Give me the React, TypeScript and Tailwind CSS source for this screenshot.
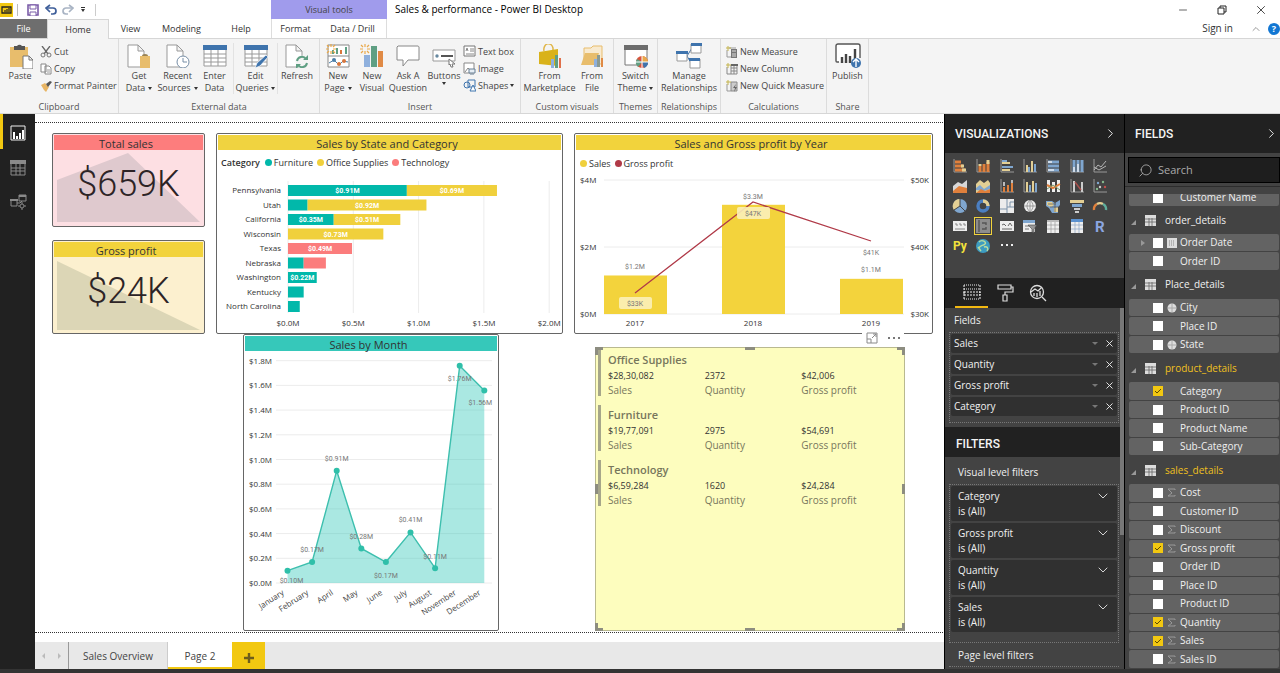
import { useState, type ReactNode } from "react";
import { ChevronDown, ChevronRight, ChevronUp, Minus, Search, X } from "lucide-react";

const YELLOW = "#f2c811";
const TEAL = "#01b8aa";
const GOLD = "#f0d03c";
const CORAL = "#fb7c7c";

type SvgProps = { children: ReactNode; size?: number };

function Svg({ children, size = 24 }: SvgProps) {
  return (
    <svg width={size} height={size} viewBox={`0 0 ${size} ${size}`} fill="none" className="shrink-0" aria-hidden="true">
      {children}
    </svg>
  );
}

/* ---------- Ribbon icons ---------- */

const page = "M4 1h10l6 6v16H4z M14 1v6h6";

function TableArt({ pencil }: { pencil?: boolean }) {
  return (
    <Svg>
      <path d="M1 2h22v20H1z" fill="#fff" stroke="#999" />
      <path d="M0 1h24v5H0z" fill="#3f74ad" />
      <path d="M1 10h22M1 14h22M1 18h22M8 6v16M15 6v16" stroke="#999" />
      {pencil && <path d="M11 24l2-5L22 11l2 2-8 9z" fill="#3f74ad" stroke="#fff" strokeWidth=".7" />}
    </Svg>
  );
}

function Spark() {
  return (
    <path d="M5 0v3M5 7v3M0 5h3M7 5h3M1 1l2 2M7 7l2 2M9 1L7 3M3 7L1 9" stroke="#e9a94b" strokeWidth="1.2" />
  );
}

const ribbonArt: Record<string, ReactNode> = {
  paste: (
    <Svg size={26}>
      <path d="M3 4h18v20H3z" fill="#e8bd6c" />
      <path d="M7 3h3a3 3 0 0 1 5 0h3v4H7z" fill="#555" />
      <path d="M16 13h6l4 4v9H16z M22 13v4h4" fill="#fff" stroke="#777" />
    </Svg>
  ),
  getData: (
    <Svg>
      <path d={page} transform="translate(-3)" fill="#fff" stroke="#999" />
      <path d="M13 12h10v12H13z" fill="#e8bd6c" />
      <path d="M15 12a3 2 0 0 1 6 0z" fill="#9a8354" />
    </Svg>
  ),
  recent: (
    <Svg>
      <path d={page} transform="translate(-3)" fill="#fff" stroke="#999" />
      <circle cx="17" cy="18" r="6" fill="#fff" stroke="#778ea6" />
      <path d="M17 14v4h4" stroke="#778ea6" />
    </Svg>
  ),
  enter: <TableArt />,
  edit: <TableArt pencil />,
  refresh: (
    <Svg>
      <path d={page} transform="translate(-3)" fill="#fff" stroke="#999" />
      <circle cx="17" cy="18" r="6.5" fill="#f4f4f4" />
      <path d="M12 17a5 5 0 0 1 9-2M22 19a5 5 0 0 1-9 2" stroke="#5f9f83" strokeWidth="2" />
      <path d="M23 11v5h-5z M11 25v-5h5z" fill="#5f9f83" />
    </Svg>
  ),
  newPage: (
    <Svg>
      <path d="M2 1h21v22H2z M2 12h21" fill="#fff" stroke="#888" />
      <path d="M7 6v4M11 4v6" stroke="#5f9f83" strokeWidth="2" />
      <path d="M15 6v4" stroke="#d9763c" strokeWidth="2" />
      <path d="M20 3v7" stroke="#5f9f83" strokeWidth="2" />
      <path d="M3 19l5-3 5 5 4-4 5 1" stroke="#4c7fa8" />
      <circle cx="8" cy="16" r="2" fill="#4c7fa8" />
      <circle cx="13" cy="20" r="2" fill="#d9763c" />
      <circle cx="18" cy="17" r="2" fill="#d9763c" />
      <Spark />
    </Svg>
  ),
  newVisual: (
    <Svg>
      <path d="M4 11h6v12H4z" fill="#8fb0dd" />
      <path d="M11 2h6v21h-6z" fill="#5f9f83" />
      <path d="M18 7h5v16h-5z" fill="#e08a45" />
      <Spark />
    </Svg>
  ),
  ask: (
    <Svg>
      <path d="M2 2h20a2 2 0 0 1 1 1v13H12l-5 6v-6H1V3z" fill="#fff" stroke="#888" />
    </Svg>
  ),
  buttons: (
    <Svg>
      <path d="M1 6h22v11H1z" fill="#fff" stroke="#999" />
      <circle cx="5" cy="12" r="1.7" fill="#6688a0" />
      <path d="M9 12h12" stroke="#555" strokeWidth="2" />
      <path d="M17 15l6 5-3 0 1 3-2 0-1-3-1 1z" fill="#fff" stroke="#777" />
    </Svg>
  ),
  market: (
    <Svg>
      <path d="M6 7a4 5 0 0 1 9-3v4" stroke="#e0b64a" strokeWidth="1.5" />
      <path d="M1 8l19-3v17L1 20z" fill="#d9b21a" />
      <path d="M13 15h3v9h-3z" fill="#8fb0dd" />
      <path d="M17 11h3v13h-3z" fill="#5f9f83" />
      <path d="M21 14h2v10h-2z" fill="#e0704a" />
    </Svg>
  ),
  file: (
    <Svg>
      <path d="M4 4h7l2-2h9v18H4z" fill="#f8ead0" stroke="#e8bd6c" />
      <path d="M1 21l4-12h14l-4 12z" fill="#e8bd6c" />
      <path d="M14 15h3v8h-3z" fill="#8fb0dd" />
      <path d="M17 11h3v12h-3z" fill="#8a9a93" />
      <path d="M21 14h2v9h-2z" fill="#e08a45" />
    </Svg>
  ),
  theme: (
    <Svg>
      <path d="M1 2h22v19H1z" fill="#fff" stroke="#777" />
      <path d="M0 1h24v5H0z" fill="#6d6d6d" />
      <circle cx="18" cy="18" r="6" fill="#d9543c" />
      <path d="M18 18V12a6 6 0 0 1 6 6z" fill="#e9a94b" />
      <path d="M18 18h6a6 6 0 0 1-4 6z" fill="#3f74ad" />
      <path d="M18 18l-5-3a6 6 0 0 0 1 8z" fill="#5f9f83" />
      <path d="M18 12v12M12 18h12" stroke="#fff" />
    </Svg>
  ),
  manage: (
    <Svg size={26}>
      <path d="M11 13l5-8M11 13l4 7" stroke="#3f74ad" />
      <path d="M1 9h10v9H1zM15 1h10v9H15zM14 16h10v9H14z" fill="#fff" stroke="#999" />
      <path d="M0 8h12v3H0zM15 0h11v3H15zM13 15h11v3H13z" fill="#3f74ad" />
    </Svg>
  ),
  publish: (
    <Svg size={26}>
      <path d="M4 19H2a1 1 0 0 1-1-1V3a2 2 0 0 1 2-2h20a2 2 0 0 1 2 2v12" fill="#fff" stroke="#555" strokeWidth="1.4" />
      <path d="M7 14v6M11 11v9M15 13v7M20 6v13" stroke="#444" strokeWidth="2.4" />
      <circle cx="21" cy="20" r="5" fill="#3f74ad" />
      <path d="M21 24v-7M18 19l3-3 3 3" stroke="#fff" strokeWidth="1.4" />
    </Svg>
  ),
};

const smallArt: Record<string, ReactNode> = {
  cut: (
    <Svg size={12}>
      <path d="M2 0l6 8M10 0L4 8" stroke="#666" strokeWidth="1.3" />
      <circle cx="3" cy="9" r="2" stroke="#777" />
      <circle cx="9" cy="9" r="2" stroke="#777" />
    </Svg>
  ),
  copy: (
    <Svg size={12}>
      <path d="M1 1h5v8H1zM5 3h4l2 2v6H5z" fill="#fff" stroke="#888" />
      <path d="M7 7h3M7 9h3" stroke="#999" />
    </Svg>
  ),
  painter: (
    <Svg size={12}>
      <path d="M1 5l4-2 4 4-3 5-2-2z" fill="#e8b564" />
      <path d="M6 4l4-3 2 1-4 5z" fill="#555" />
    </Svg>
  ),
  textBox: (
    <Svg size={13}>
      <path d="M1 1h11v10H1z" fill="#fff" stroke="#777" />
      <path d="M3 6l1-3 1 3M7 4h4M7 6h4M3 9h8" stroke="#888" />
    </Svg>
  ),
  image: (
    <Svg size={13}>
      <path d="M1 1h10v10H1z" fill="#fff" stroke="#888" />
      <path d="M2 10l3-4 3 3" stroke="#888" />
      <path d="M6 7h6v4H6zM7 13h4" fill="#e6eef5" stroke="#667f94" />
    </Svg>
  ),
  shapes: (
    <Svg size={13}>
      <circle cx="4" cy="6" r="3" stroke="#3f74ad" />
      <path d="M5 1h7v7H5z" stroke="#3f74ad" />
      <path d="M7 12l3-6 3 6z" fill="#fff" stroke="#3f74ad" />
    </Svg>
  ),
  measure: (
    <Svg size={12}>
      <path d="M1 4v7h4M3 2h7" stroke="#999" />
      <path d="M5 3h6v9H5z" fill="#777" />
      <path d="M6 5h4M6 8h4M6 10h4" stroke="#ddd" />
      <path d="M2 0v5M0 2h5" stroke="#c4b44f" />
    </Svg>
  ),
  column: (
    <Svg size={12}>
      <path d="M1 4v7h10V2H5" stroke="#888" />
      <path d="M5 2v9M8 2v9M5 5h6M5 8h6" stroke="#888" />
      <path d="M5 1h7v2H5z" fill="#666" />
      <path d="M2 0v5M0 2h5" stroke="#c4b44f" />
    </Svg>
  ),
  quick: (
    <Svg size={12}>
      <path d="M1 4v7h4" stroke="#999" />
      <path d="M5 2h6v9H5z" fill="#ccc" stroke="#888" />
      <path d="M10 4l-3 4h2l-1 4 3-5H9z" fill="#666" />
      <path d="M2 0v5M0 2h5" stroke="#c4b44f" />
    </Svg>
  ),
};

/* ---------- Ribbon ---------- */

type BigProps = { icon: string; top: string; bottom?: string; caret?: boolean; width: string };

function BigButton({ icon, top, bottom, caret, width }: BigProps) {
  return (
    <button type="button" className={`flex flex-col items-center leading-[12px] ${width}`}>
      <span className="mb-px flex h-[26px] items-center">{ribbonArt[icon]}</span>
      <span className="whitespace-nowrap">{top}</span>
      <span className="flex items-center gap-[3px] whitespace-nowrap">
        {bottom}
        {caret && <Caret />}
      </span>
    </button>
  );
}

function Caret() {
  return <span className="border-x-2 border-t-[3px] border-x-transparent border-t-[#333]" />;
}

function SmallButton({ icon, label, caret }: { icon: string; label: string; caret?: boolean }) {
  return (
    <button type="button" className="flex h-[17px] items-center gap-0.5 whitespace-nowrap">
      {smallArt[icon]}
      {label}
      {caret && <Caret />}
    </button>
  );
}

function Group({ label, width, children }: { label: string; width: string; children: ReactNode }) {
  return (
    <section className={`flex shrink-0 flex-col justify-between border-r border-[#dcdcdc] ${width}`}>
      <div className="flex pt-1">{children}</div>
      <div className="text-center leading-3 text-[#555]">{label}</div>
    </section>
  );
}

function Ribbon() {
  return (
    <div className="flex h-[76px] shrink-0 border-y border-[#d6d6d6] bg-[#f4f4f4] text-[9px] text-[#444]">
      <Group label="Clipboard" width="w-[119px]">
        <BigButton icon="paste" top="Paste" width="w-10" />
        <div className="flex flex-col">
          <SmallButton icon="cut" label="Cut" />
          <SmallButton icon="copy" label="Copy" />
          <SmallButton icon="painter" label="Format Painter" />
        </div>
      </Group>
      <Group label="External data" width="w-[201px]">
        <BigButton icon="getData" top="Get" bottom="Data" caret width="w-10" />
        <BigButton icon="recent" top="Recent" bottom="Sources" caret width="w-[37px]" />
        <BigButton icon="enter" top="Enter" bottom="Data" width="w-[37px]" />
        <BigButton icon="edit" top="Edit" bottom="Queries" caret width="w-[45px] border-x border-[#e2e2e2]" />
        <BigButton icon="refresh" top="Refresh" width="w-[38px]" />
      </Group>
      <Group label="Insert" width="w-[201px]">
        <BigButton icon="newPage" top="New" bottom="Page" caret width="w-[36px]" />
        <BigButton icon="newVisual" top="New" bottom="Visual" width="w-8" />
        <BigButton icon="ask" top="Ask A" bottom="Question" width="w-10" />
        <BigButton icon="buttons" top="Buttons" caret width="w-8" />
        <div className="ml-[3px] flex flex-col">
          <SmallButton icon="textBox" label="Text box" />
          <SmallButton icon="image" label="Image" />
          <SmallButton icon="shapes" label="Shapes" caret />
        </div>
      </Group>
      <Group label="Custom visuals" width="w-[93px]">
        <BigButton icon="market" top="From" bottom="Marketplace" width="w-[57px]" />
        <BigButton icon="file" top="From" bottom="File" width="w-7" />
      </Group>
      <Group label="Themes" width="w-11">
        <BigButton icon="theme" top="Switch" bottom="Theme" caret width="w-[43px]" />
      </Group>
      <Group label="Relationships" width="w-[63px]">
        <BigButton icon="manage" top="Manage" bottom="Relationships" width="w-[62px]" />
      </Group>
      <Group label="Calculations" width="w-[106px]">
        <div className="ml-[5px] flex flex-col">
          <SmallButton icon="measure" label="New Measure" />
          <SmallButton icon="column" label="New Column" />
          <SmallButton icon="quick" label="New Quick Measure" />
        </div>
      </Group>
      <Group label="Share" width="w-[42px]">
        <BigButton icon="publish" top="Publish" width="w-[41px]" />
      </Group>
    </div>
  );
}

/* ---------- Title bar and menu tabs ---------- */

function TitleBar() {
  return (
    <header className="flex h-[19px] shrink-0 items-stretch text-[#333]">
      <div className="flex w-[271px] items-center">
        <svg width="13" height="14" viewBox="0 0 13 14" aria-hidden="true">
          <path d="M0 0h13v14H0z" fill={YELLOW} />
          <path d="M2 10V4h9v6z" fill="none" stroke="#222" strokeWidth="1.3" />
          <path d="M5 9V7M7 9V6M9 9V5" stroke="#222" strokeWidth="1.2" />
        </svg>
        <span className="ml-1 h-3 border-l border-[#bbb]" />
        <button type="button" aria-label="Save" className="ml-[9px]">
          <Svg size={12}>
            <path d="M1 1h10v10H1z" stroke="#7b5ca8" strokeWidth="1.6" />
            <path d="M3 1h6v4H3zM3 8h6v4H3z" fill="#fff" stroke="#7b5ca8" />
          </Svg>
        </button>
        <button type="button" aria-label="Undo" className="ml-[6px]">
          <Svg size={12}>
            <path d="M2 4h6a3 3 0 0 1 0 6H6" stroke="#3f5f9a" strokeWidth="1.7" />
            <path d="M5 1L1 4l4 4" stroke="#3f5f9a" strokeWidth="1.7" />
          </Svg>
        </button>
        <button type="button" aria-label="Redo" className="ml-[5px]">
          <Svg size={12}>
            <path d="M10 4H4a3 3 0 0 0 0 6h2" stroke="#a9b4c4" strokeWidth="1.7" />
            <path d="M7 1l4 3-4 4" stroke="#a9b4c4" strokeWidth="1.7" />
          </Svg>
        </button>
        <button type="button" aria-label="Customize toolbar" className="ml-[7px] flex flex-col items-center gap-px">
          <span className="h-px w-1 bg-[#333]" />
          <Caret />
        </button>
        <span className="ml-[10px] h-3 border-l border-[#ccc]" />
      </div>
      <div className="flex w-[116px] items-center justify-center bg-[#a09bec] text-[9px] text-[#444]">Visual tools</div>
      <h1 className="flex flex-1 items-center pl-2 text-[10px] text-black">Sales &amp; performance - Power BI Desktop</h1>
      <div className="flex w-[117px] items-center justify-between pr-3">
        <button type="button" aria-label="Minimize" className="ml-[14px]">
          <Minus size={12} strokeWidth={1.5} />
        </button>
        <button type="button" aria-label="Restore">
          <Svg size={10}>
            <path d="M1 3h6v6H1zM3 3V1h6v6H7" stroke="#222" />
          </Svg>
        </button>
        <button type="button" aria-label="Close">
          <X size={14} strokeWidth={1.5} />
        </button>
      </div>
    </header>
  );
}

function MenuTabs() {
  return (
    <nav className="flex h-[19px] shrink-0 items-stretch text-[9px] text-[#333]">
      <button type="button" className="w-[47px] bg-[#6e6e6e] text-white">File</button>
      <button type="button" className="relative z-10 -mb-px w-[62px] border-x border-t border-[#d6d6d6] bg-[#f4f4f4]">Home</button>
      <button type="button" className="w-[43px]">View</button>
      <button type="button" className="w-[59px]">Modeling</button>
      <button type="button" className="w-[60px]">Help</button>
      <button type="button" className="w-[48px] border-l border-[#ddd]">Format</button>
      <button type="button" className="w-[68px] border-r border-[#ddd]">Data / Drill</button>
      <div className="ml-auto flex items-center">
        <button type="button" className="text-[10px]">Sign in</button>
        <button type="button" aria-label="Collapse ribbon" className="ml-[17px] text-[#999]">
          <ChevronUp size={12} />
        </button>
        <button type="button" aria-label="Help center" className="ml-[6px] size-3 rounded-full bg-[#1277d3] text-[9px] leading-3 font-bold text-white">
          ?
        </button>
      </div>
    </nav>
  );
}

/* ---------- Left view switcher ---------- */

function ViewRail() {
  return (
    <nav className="flex w-[35px] shrink-0 flex-col bg-[#212121]">
      <button type="button" aria-label="Report" className="flex h-[35px] items-center border-l-[3px] border-[#f2c811] pt-0.5 pl-[7px]">
        <Svg size={16}>
          <path d="M1 1h14v14H1z" stroke="#eee" />
          <path d="M4 14V7M7 14v-3M10 14V8M13 14V5" stroke="#fff" strokeWidth="2" />
        </Svg>
      </button>
      <button type="button" aria-label="Data" className="flex h-[35px] items-center pt-0.5 pl-[10px]">
        <Svg size={16}>
          <path d="M1 2h14v13H1z" stroke="#8a8a8a" />
          <path d="M0 0h16v4H0z" fill="#8a8a8a" />
          <path d="M1 8h14M1 11h14M6 4v11M10 4v11" stroke="#8a8a8a" />
        </Svg>
      </button>
      <button type="button" aria-label="Model" className="flex h-[35px] items-center pt-0.5 pl-[10px]">
        <Svg size={17}>
          <path d="M1 6h6v6H1zM9 1h7v6H9zM7 9h3l2-2" stroke="#8a8a8a" />
          <path d="M0 5h8v2H0zM9 1h7v2H9z" fill="#8a8a8a" />
          <circle cx="12" cy="12" r="2" stroke="#8a8a8a" />
          <path d="M12 8v2M12 14v2M8 12h2M14 12h2" stroke="#8a8a8a" />
        </Svg>
      </button>
    </nav>
  );
}

/* ---------- Report visuals ---------- */

function Tile({ title, bar, body = "bg-white", children }: { title: string; bar: string; body?: string; children: ReactNode }) {
  return (
    <article className={`flex min-w-0 flex-col overflow-hidden rounded-[2px] border border-[#666] ${body}`}>
      <h2 className={`mx-px mt-px h-[15px] shrink-0 pr-[5px] text-center text-[11px] leading-[17px] whitespace-nowrap text-[#333] ${bar}`}>{title}</h2>
      {children}
    </article>
  );
}

function Kpi({ value, points, fill }: { value: string; points: string; fill: string }) {
  return (
    <div className="relative flex flex-1 items-center justify-center font-['Roboto','Liberation_Sans',sans-serif] text-[36px] font-light leading-[38px] text-[#2d2426]">
      <svg className="absolute inset-0 size-full" viewBox="0 0 151 76" preserveAspectRatio="none" aria-hidden="true">
        <polygon points={points} fill={fill} />
      </svg>
      <span className="relative pb-2">{value}</span>
    </div>
  );
}

function Legend({ color, label }: { color: string; label: string }) {
  return (
    <span className="flex items-center gap-0.5">
      <span className={`size-[7px] rounded-full ${color}`} />
      {label}
    </span>
  );
}

type Part = { value: number; color: string; label?: string };

const states: { name: string; parts: Part[] }[] = [
  { name: "Pennsylvania", parts: [{ value: 0.91, color: TEAL, label: "$0.91M" }, { value: 0.69, color: GOLD, label: "$0.69M" }] },
  { name: "Utah", parts: [{ value: 0.15, color: TEAL }, { value: 0.91, color: GOLD, label: "$0.92M" }] },
  { name: "California", parts: [{ value: 0.35, color: TEAL, label: "$0.35M" }, { value: 0.51, color: GOLD, label: "$0.51M" }] },
  { name: "Wisconsin", parts: [{ value: 0.73, color: GOLD, label: "$0.73M" }] },
  { name: "Texas", parts: [{ value: 0.49, color: CORAL, label: "$0.49M" }] },
  { name: "Nebraska", parts: [{ value: 0.12, color: TEAL }, { value: 0.17, color: CORAL }] },
  { name: "Washington", parts: [{ value: 0.22, color: TEAL, label: "$0.22M" }] },
  { name: "Kentucky", parts: [{ value: 0.12, color: TEAL }] },
  { name: "North Carolina", parts: [{ value: 0.09, color: TEAL }] },
];

const axisText = "font-['Open_Sans','Noto_Sans',sans-serif] text-[8px]";
const dataText = "font-['Roboto','Liberation_Sans',sans-serif] text-[7px]";

function StateChart() {
  const x0 = 71;
  const perM = 130.6;
  return (
    <svg viewBox="0 0 345 157" className="w-full" role="img" aria-label="Sales by State and Category">
      {[0, 0.5, 1, 1.5, 2].map((t) => (
        <g key={t}>
          <path d={`M${x0 + t * perM} 6v132`} stroke="#ececec" />
          <text x={x0 + t * perM} y={151} textAnchor="middle" fill="#333" className={axisText}>{`$${t.toFixed(1)}M`}</text>
        </g>
      ))}
      {states.map((state, i) => {
        const y = 10 + i * 14.5;
        let x = x0;
        return (
          <g key={state.name}>
            <text x={64} y={y + 8} textAnchor="end" fill="#333" className={axisText}>{state.name}</text>
            {state.parts.map((part) => {
              const left = x;
              const width = part.value * perM;
              x += width;
              return (
                <g key={part.color}>
                  <rect x={left} y={y} width={width} height={11} fill={part.color} />
                  {part.label && (
                    <text x={left + width / 2} y={y + 8} textAnchor="middle" fill="#fff" className={`font-bold ${dataText}`}>
                      {part.label}
                    </text>
                  )}
                </g>
              );
            })}
          </g>
        );
      })}
    </svg>
  );
}

const years = [
  { year: "2017", x: 60, bar: 1.15, label: "$1.2M", labelY: 97, line: 121, profit: "$33K", profitY: 131, pill: true },
  { year: "2018", x: 178, bar: 3.26, label: "$3.3M", labelY: 27, line: 30, profit: "$47K", profitY: 41, pill: true },
  { year: "2019", x: 296, bar: 1.05, label: "$1.1M", labelY: 100, line: 69, profit: "$41K", profitY: 80, pill: false },
];

function YearChart() {
  return (
    <svg viewBox="0 0 357 161" className="w-full" role="img" aria-label="Sales and Gross profit by Year">
      {[8, 75, 142].map((y, i) => (
        <g key={y}>
          <path d={`M29 ${y}h300`} stroke="#ececec" />
          <text x={5} y={y + 3} fill="#333" className={axisText}>{["$4M", "$2M", "$0M"][i]}</text>
          <text x={354} y={y + 3} textAnchor="end" fill="#333" className={axisText}>{["$50K", "$40K", "$30K"][i]}</text>
        </g>
      ))}
      {years.map((d) => (
        <g key={d.year}>
          <rect x={d.x - 31} y={142 - d.bar * 33.5} width={63} height={d.bar * 33.5} fill="#f3d33c" />
          <text x={d.x} y={154} textAnchor="middle" fill="#333" className={axisText}>{d.year}</text>
          <text x={d.x} y={d.labelY} textAnchor="middle" fill="#777" className={dataText}>{d.label}</text>
        </g>
      ))}
      <polyline points={years.map((d) => `${d.x},${d.line}`).join(" ")} fill="none" stroke="#b03a48" strokeWidth="1.3" />
      {years.map((d) => (
        <g key={d.profit}>
          {d.pill && <rect x={d.x - 16} y={d.profitY - 6} width={33} height={12} rx={2} fill="#fbefb9" fillOpacity=".9" />}
          <text x={d.x} y={d.profitY + 3} textAnchor="middle" fill="#777" className={dataText}>{d.profit}</text>
        </g>
      ))}
    </svg>
  );
}

const months = [
  { name: "January", value: 0.1, label: "$0.10M", dx: 4, dy: 12 },
  { name: "February", value: 0.17, label: "$0.17M", dx: 0, dy: -10 },
  { name: "April", value: 0.91, label: "$0.91M", dx: 0, dy: -10 },
  { name: "May", value: 0.28, label: "$0.28M", dx: 0, dy: -9 },
  { name: "June", value: 0.17, label: "$0.17M", dx: 0, dy: 16 },
  { name: "July", value: 0.41, label: "$0.41M", dx: 0, dy: -10 },
  { name: "August", value: 0.12, label: "$0.11M", dx: 0, dy: -9 },
  { name: "November", value: 1.76, label: "$1.76M", dx: 0, dy: 15 },
  { name: "December", value: 1.56, label: "$1.56M", dx: -4, dy: 15 },
];

function MonthChart() {
  const base = 232;
  const pts = months.map((m, i) => ({ ...m, x: 43.5 + i * 24.6, y: base - m.value * 123.4 }));
  const line = pts.map((p) => `${p.x},${p.y}`).join(" ");
  return (
    <svg viewBox="0 0 254 279" className="w-full" role="img" aria-label="Sales by Month">
      {Array.from({ length: 10 }, (_, i) => (
        <g key={i}>
          <path d={`M32 ${base - i * 24.7}h216`} stroke="#ececec" />
          <text x={5} y={base + 3 - i * 24.7} fill="#333" className={axisText}>{`$${(i * 0.2).toFixed(1)}M`}</text>
        </g>
      ))}
      <polygon points={`43.5,${base} ${line} 240.3,${base}`} fill="#35c9bb" fillOpacity=".42" />
      <polyline points={line} fill="none" stroke="#3dbfae" strokeWidth="1.4" />
      {pts.map((p) => (
        <g key={p.name}>
          <circle cx={p.x} cy={p.y} r={3} fill="#2fbfa9" />
          <text x={p.x + p.dx} y={p.y + p.dy} textAnchor="middle" fill="#777" className={dataText}>{p.label}</text>
          <text transform={`translate(${p.x - 3} 243) rotate(-33)`} textAnchor="end" fill="#444" className={axisText}>{p.name}</text>
        </g>
      ))}
    </svg>
  );
}

const cards = [
  { category: "Office Supplies", sales: "$28,30,082", quantity: "2372", profit: "$42,006" },
  { category: "Furniture", sales: "$19,77,091", quantity: "2975", profit: "$54,691" },
  { category: "Technology", sales: "$6,59,284", quantity: "1620", profit: "$24,284" },
];

const handles = [
  "-top-px -left-px h-2 w-2 border-t-[3px] border-l-[3px]",
  "-top-px left-1/2 h-[3px] w-[10px] -translate-x-1/2 border-t-[3px]",
  "-top-px -right-px h-2 w-2 border-t-[3px] border-r-[3px]",
  "top-1/2 -left-px h-[10px] w-[3px] -translate-y-1/2 border-l-[3px]",
  "top-1/2 -right-px h-[10px] w-[3px] -translate-y-1/2 border-r-[3px]",
  "-bottom-px -left-px h-2 w-2 border-b-[3px] border-l-[3px]",
  "-bottom-px left-1/2 h-[3px] w-[10px] -translate-x-1/2 border-b-[3px]",
  "-right-px -bottom-px h-2 w-2 border-r-[3px] border-b-[3px]",
];

function MultiRowCard() {
  return (
    <article className="relative mt-[13px] flex min-w-0 flex-col gap-[9px] border border-[#b9b98f] bg-[#fdfdbe] pt-[2px] pl-[2px]">
      <div className="absolute -top-4 right-0 flex h-3 items-center gap-[10px] bg-white px-1">
        <button type="button" aria-label="Focus mode">
          <Svg size={12}>
            <path d="M1 1h10v10H1zM1 7h4v4M6 6l4-4M7 2h3v3" stroke="#8a8a8a" />
          </Svg>
        </button>
        <button type="button" aria-label="More options">
          <Svg size={12}>
            <path d="M0 6h2M5 6h2M10 6h2" stroke="#777" strokeWidth="2" />
          </Svg>
        </button>
      </div>
      {cards.map((c) => (
        <section key={c.category} className="h-[46px] border-l-[3px] border-[#a6a68a] pr-[6px] pl-[7px]">
          <h3 className="text-[11px] leading-[19px] font-semibold text-[#77765c]">{c.category}</h3>
          <dl className="grid grid-cols-3 text-[10px] leading-[14px]">
            {[["Sales", c.sales], ["Quantity", c.quantity], ["Gross profit", c.profit]].map(([name, value]) => (
              <div key={name} className="flex flex-col-reverse">
                <dt className="text-[#77765c]">{name}</dt>
                <dd className="text-[9px] text-[#333]">{value}</dd>
              </div>
            ))}
          </dl>
        </section>
      ))}
      {handles.map((h) => (
        <span key={h} className={`absolute border-[#8d8d80] ${h}`} />
      ))}
    </article>
  );
}

function Report() {
  return (
    <main className="flex min-w-0 flex-1 flex-col bg-white">
      <div className="mt-2 mr-px flex-1">
        <div className="border-y border-dotted border-[#333]">
          <div className="grid grid-cols-[153fr_347fr_359fr] gap-x-[11px] pt-[10px] pr-[10px] pl-[17px]">
            <div className="grid grid-rows-2 gap-[13px]">
              <Tile title="Total sales" bar="bg-[#fd7d7d]" body="bg-[#fddfe3]">
                <Kpi value="$659K" points="4,30 75,3 147,72 4,72" fill="#dfc9ce" />
              </Tile>
              <Tile title="Gross profit" bar="bg-[#f2d33c]" body="bg-[#fcf0cf]">
                <Kpi value="$24K" points="4,4 147,73 4,73" fill="#dcd6b6" />
              </Tile>
            </div>
            <Tile title="Sales by State and Category" bar="bg-[#f0d340]">
              <div className="flex h-[25px] items-center gap-1 pl-1 text-[9px] text-[#333]">
                <span className="mr-px font-semibold">Category</span>
                <Legend color="bg-[#01b8aa]" label="Furniture" />
                <Legend color="bg-[#f0d03c]" label="Office Supplies" />
                <Legend color="bg-[#fb7c7c]" label="Technology" />
              </div>
              <StateChart />
            </Tile>
            <Tile title="Sales and Gross profit by Year" bar="bg-[#f2d33c]">
              <div className="mt-[5px] flex h-[17px] items-center gap-1 pl-[5px] text-[9px] text-[#333]">
                <Legend color="bg-[#f0d03c]" label="Sales" />
                <Legend color="bg-[#b03a48]" label="Gross profit" />
              </div>
              <YearChart />
            </Tile>
          </div>
          <div className="grid grid-cols-[256fr_310fr] gap-x-[96px] pr-[38px] pb-px pl-[208px]">
            <Tile title="Sales by Month" bar="bg-[#36c8ba]">
              <MonthChart />
            </Tile>
            <MultiRowCard />
          </div>
        </div>
      </div>
      <nav className="flex h-[27px] shrink-0 bg-[#e8e8e8] text-[10px] text-[#444]">
        <div className="flex w-[34px] items-center justify-around border-r border-[#999]">
          <button type="button" aria-label="Previous page" className="border-y-[3px] border-r-[3px] border-y-transparent border-r-[#bbb]" />
          <button type="button" aria-label="Next page" className="border-y-[3px] border-l-[3px] border-y-transparent border-l-[#bbb]" />
        </div>
        <button type="button" className="w-[99px] border-r border-[#ccc] pt-0.5">Sales Overview</button>
        <button type="button" className="w-16 border-b-2 border-[#f2c811] bg-white pt-1">Page 2</button>
        <button type="button" aria-label="New page" className="flex w-[33px] items-center justify-center bg-[#f2c811] pt-1">
          <Svg size={10}>
            <path d="M5 0v10M0 5h10" stroke="#6d5d1c" strokeWidth="2.4" />
          </Svg>
        </button>
      </nav>
    </main>
  );
}

/* ---------- Visualizations pane ---------- */

const O = "#e0803c";
const B = "#7fa6cf";
const C = "#e3cf94";
const G = "#8d8d8d";

function Axis() {
  return <path d="M1 0v13h13" stroke="#999" />;
}

const vizArt: { name: string; art: ReactNode }[] = [
  { name: "Stacked bar chart", art: <><Axis /><path d="M2 3h6M2 7h8M2 11h10" stroke={O} strokeWidth="3" /><path d="M8 7h3M9 11h4" stroke={C} strokeWidth="3" /></> },
  { name: "Stacked column chart", art: <><Axis /><path d="M4 13V7M8 13V5M12 13V3" stroke={O} strokeWidth="3" /><path d="M4 7V5M12 5V1" stroke={C} strokeWidth="3" /></> },
  { name: "Clustered bar chart", art: <><Axis /><path d="M2 2h5M2 8h11" stroke={B} strokeWidth="2" /><path d="M2 4h8M2 11h8" stroke={C} strokeWidth="2" /></> },
  { name: "Clustered column chart", art: <><Axis /><path d="M4 13V6M9 13V2" stroke={C} strokeWidth="2" /><path d="M6 13V8M12 13V5" stroke={B} strokeWidth="2" /></> },
  { name: "100% stacked bar chart", art: <><Axis /><path d="M2 3h11M2 7h11M2 11h11" stroke={B} strokeWidth="3" /><path d="M2 3h4M2 11h6" stroke="#cfdcea" strokeWidth="2" /></> },
  { name: "100% stacked column chart", art: <><Axis /><path d="M4 13V1M8 13V1M12 13V1" stroke={B} strokeWidth="3" /><path d="M4 13V8M8 13V5" stroke="#cfdcea" strokeWidth="2" /></> },
  { name: "Line chart", art: <><Axis /><path d="M1 11l4-5 3 2 5-6M1 8l5 3 7-4" stroke="#b5b5b5" /></> },
  { name: "Area chart", art: <><path d="M0 7l5-4 4 2 5-4v12H0z" fill="#d8d8d8" /><path d="M0 12l6-5 8 2v5H0z" fill={O} /></> },
  { name: "Stacked area chart", art: <><path d="M0 5l4-4 4 3 4-3 2 3v10H0z" fill={C} /><path d="M0 9l4-3 4 4 6-4v4l-6 2-8-1z" fill={B} /><path d="M0 14l5-4 4 2 5-2v4z" fill={O} /></> },
  { name: "Line and stacked column chart", art: <><Axis /><path d="M4 13V8M8 13V6M12 13V4" stroke={O} strokeWidth="2" /><path d="M4 7V3M12 4V1" stroke="#bbb" strokeWidth="2" /></> },
  { name: "Line and clustered column chart", art: <><Axis /><path d="M4 13V3M10 13V2" stroke={C} strokeWidth="2" /><path d="M7 13V6M13 13V4" stroke={B} strokeWidth="2" /></> },
  { name: "Ribbon chart", art: <><path d="M1 1h3v12H1zM6 3h3v10H6zM11 1h3v12h-3z" fill="#eee" /><path d="M1 6l6 3 7-4" stroke={O} strokeWidth="2" /><path d="M1 10l6-4 7 5" stroke="#6f9a6a" /></> },
  { name: "Waterfall chart", art: <><Axis /><path d="M4 13V2M12 13V3" stroke="#ccc" strokeWidth="2" /><path d="M5 3l6 8" stroke="#a9504d" strokeWidth="1.4" /></> },
  { name: "Scatter chart", art: <><Axis /><circle cx="5" cy="4" r="1.2" fill={B} /><circle cx="10" cy="3" r="1.2" fill="#86b98d" /><circle cx="7" cy="8" r="1.2" fill="#ccc" /><circle cx="12" cy="8" r="1.2" fill="#c1524f" /><circle cx="4" cy="10" r="1.2" fill="#86b98d" /></> },
  { name: "Pie chart", art: <><circle cx="7" cy="7" r="7" fill={B} /><path d="M7 7V0a7 7 0 0 0-6 11z" fill={C} /><path d="M7 7V0M7 7l5 5M7 7l-6 4" stroke="#434343" /></> },
  { name: "Donut chart", art: <><circle cx="7" cy="7" r="5" stroke="#4b7fc2" strokeWidth="3.4" /><path d="M7 2a5 5 0 0 1 5 5" stroke={C} strokeWidth="3.4" /></> },
  { name: "Treemap", art: <><path d="M0 0h14v14H0z" fill="#ececec" /><path d="M7 0v14M7 8h7M10 3h4M0 10h7M10 3v5" stroke="#7d93aa" /></> },
  { name: "Map", art: <><circle cx="7" cy="7" r="6" fill="#eee" /><path d="M1 7h12M7 1v12M7 1c-4 4-4 8 0 12M7 1c4 4 4 8 0 12" stroke="#8a8a8a" strokeWidth=".8" /></> },
  { name: "Filled map", art: <><path d="M0 2h6l3 2 5-3v5l-3 3 1 5H6L3 9 0 7z" fill={B} /><path d="M1 3h5l2 3-3 2-4-2z" fill={C} /><path d="M8 9l4-1v5H8z" fill={C} /><path d="M2 5h8M4 8h8M9 2v11" stroke="#555" strokeWidth=".7" /></> },
  { name: "Funnel", art: <><path d="M0 1h14v3H0z" fill={C} /><path d="M2 5h10v3H2z" fill={B} /><path d="M4 9h6v2H4zM5 12h4v2H5z" fill="#ccc" /></> },
  { name: "Gauge", art: <><path d="M1 11a6 6 0 0 1 3-6" stroke={O} strokeWidth="2.4" /><path d="M4 5a6 6 0 0 1 6 0" stroke={C} strokeWidth="2.4" /><path d="M10 5a6 6 0 0 1 3 6" stroke="#5fae9c" strokeWidth="2.4" /></> },
  { name: "Card", art: <><path d="M0 2h14v10H0z" fill="#eee" /><path d="M2 5h2v2M6 5h2v2M10 5h2v2M2 10h10" stroke="#888" /></> },
  { name: "Multi-row card", art: <><path d="M0 0h14v14H0z" fill={G} /><path d="M3 1v12M6 4h4v2M6 10h4V8" stroke="#555" strokeWidth="1.4" /></> },
  { name: "KPI", art: <><path d="M0 2h14v10H0z" fill="#eee" /><path d="M2 6l2-1 2 2M8 7l2-3 2 3M2 10h10" stroke="#666" /></> },
  { name: "Slicer", art: <><path d="M0 1h12v12H0z" fill="#eee" /><path d="M0 1h12v3H0z" fill={B} /><path d="M2 7h4M2 10h4" stroke="#777" /><path d="M5 6h9l-3 4v4l-2-1v-3z" fill="#999" stroke="#434343" strokeWidth=".6" /></> },
  { name: "Table", art: <><path d="M1 1h12v13H1z" fill="#eee" /><path d="M1 1h12v2H1z" fill="#bbb" /><path d="M1 6h12M1 10h12M5 3v11M9 3v11" stroke="#999" strokeWidth=".7" /></> },
  { name: "Matrix", art: <><path d="M1 1h12v13H1z" fill="#eee" /><path d="M1 0h12v3H1z" fill="#5b91cf" /><path d="M1 6h12M1 10h12M5 3v11M9 3v11" stroke="#8aa4c4" strokeWidth=".7" /></> },
  { name: "R script visual", art: <text x="2" y="13" fill="#8ba6e0" className="font-['Roboto',sans-serif] text-[15px] font-bold">R</text> },
  { name: "Python visual", art: <text x="0" y="11" fill="#f2e23c" className="font-['Roboto',sans-serif] text-[12px] font-bold">Py</text> },
  { name: "ArcGIS map", art: <><circle cx="7" cy="7" r="7" fill="#3d9cc0" /><path d="M3 3c3-3 8 0 6 2s-5 1-6 4M8 8c3-1 5 1 3 4M2 8l3 4" stroke="#b9dca0" strokeWidth="1.4" /></> },
  { name: "More visuals", art: <path d="M1 6h2M6 6h2M11 6h2" stroke="#eee" strokeWidth="2" /> },
];

function PaneHeader({ title }: { title: string }) {
  return (
    <div className="flex h-[39px] shrink-0 items-center justify-between bg-[#212121] pr-1.5 pl-[10px] text-[#f4f4f4]">
      <h2 className="font-['Roboto','Liberation_Sans',sans-serif] text-[12px] font-medium">{title}</h2>
      <button type="button" aria-label={`Collapse ${title}`}>
        <ChevronRight size={15} strokeWidth={1.5} />
      </button>
    </div>
  );
}

function Visualizations() {
  const wells = ["Sales", "Quantity", "Gross profit", "Category"];
  const filters = ["Category", "Gross profit", "Quantity", "Sales"];
  return (
    <aside className="flex w-[181px] shrink-0 flex-col overflow-hidden border-x border-black bg-[#434343] text-[10px] text-[#f0f0f0]">
      <PaneHeader title="VISUALIZATIONS" />
      <div className="grid h-[125px] shrink-0 auto-rows-[20px] grid-cols-7 pt-[3px] pr-3 pl-[3px]">
        {vizArt.map((v) => (
          <button
            key={v.name}
            type="button"
            aria-label={v.name}
            className={`flex size-[18px] items-center justify-center place-self-center border ${v.name === "Multi-row card" ? "border-[#f2d33c]" : "border-transparent"}`}
          >
            <svg width="14" height="14" viewBox="0 0 14 14" fill="none" overflow="visible" aria-hidden="true">{v.art}</svg>
          </button>
        ))}
      </div>
      <div className="flex h-[30px] shrink-0 bg-[#212121] pl-[10px]">
        <button type="button" aria-label="Fields" className="flex w-[33px] items-center justify-center border-b-2 border-[#f2b811]">
          <Svg size={18}>
            <path d="M1 2h16M1 6h16M1 16h16" stroke="#eee" strokeDasharray="1 1" />
            <path d="M1 9h16v3H1zM1 2v14M17 2v14" stroke="#eee" strokeDasharray="2 1" />
          </Svg>
        </button>
        <button type="button" aria-label="Format" className="flex w-[33px] items-center justify-center">
          <Svg size={18}>
            <path d="M2 1h13v4H2zM15 3h2v5H9v3M7 11h4v6H7z" stroke="#ddd" strokeWidth="1.2" />
          </Svg>
        </button>
        <button type="button" aria-label="Analytics" className="flex w-[33px] items-center justify-center">
          <Svg size={18}>
            <circle cx="8" cy="8" r="6.5" stroke="#ddd" strokeWidth="1.3" />
            <path d="M13 13l4 4M2 8l4-3 3 2 4-4M5 12V9M8 13V9M11 12V7" stroke="#ddd" strokeWidth="1.3" />
          </Svg>
        </button>
      </div>
      <div className="flex min-h-0 flex-1">
        <div className="flex min-w-0 flex-1 flex-col">
          <h3 className="h-6 shrink-0 pl-[9px] leading-6">Fields</h3>
          <ul className="mr-px ml-1 flex h-[91px] shrink-0 flex-col gap-0.5 border border-dotted border-[#777] px-px pt-px">
            {wells.map((w) => (
              <li key={w} className="flex h-[19px] items-center rounded-[2px] bg-[#303030] pr-0.5 pl-[3px]">
                <span className="flex-1">{w}</span>
                <button type="button" aria-label={`${w} options`} className="mr-[6px] border-x-[3px] border-t-[3px] border-x-transparent border-t-[#777]" />
                <button type="button" aria-label={`Remove ${w}`}>
                  <X size={11} />
                </button>
              </li>
            ))}
          </ul>
          <h2 className="mt-1 h-[30px] shrink-0 bg-[#212121] pl-[11px] font-['Roboto','Liberation_Sans',sans-serif] text-[12px] leading-[35px] font-medium text-[#f4f4f4]">FILTERS</h2>
          <h3 className="h-[27px] shrink-0 pl-[13px] leading-[30px]">Visual level filters</h3>
          <ul className="mr-px ml-1 flex h-[159px] shrink-0 flex-col gap-0.5 border border-dotted border-[#777] px-px pt-px">
            {filters.map((f) => (
              <li key={f} className="flex h-[35px] items-start justify-between rounded-[2px] bg-[#303030] pt-0.5 pr-1.5 pl-[7px] leading-[15px]">
                <div className="pt-px">
                  <div>{f}</div>
                  <div>is (All)</div>
                </div>
                <button type="button" aria-label={`Expand ${f}`}>
                  <ChevronDown size={16} strokeWidth={1.3} />
                </button>
              </li>
            ))}
          </ul>
          <h3 className="mr-px ml-1 h-6 shrink-0 border-b border-dotted border-[#777] pl-[9px] leading-6">Page level filters</h3>
        </div>
        <div className="h-[227px] w-1 bg-[#777]" />
      </div>
    </aside>
  );
}

/* ---------- Fields pane ---------- */

type FieldRow = { name: string; icon?: "sum" | "globe" | "date"; checked?: boolean };

const tables: { name: string; used?: boolean; rows: FieldRow[] }[] = [
  { name: "order_details", rows: [{ name: "Order Date", icon: "date" }, { name: "Order ID" }] },
  { name: "Place_details", rows: [{ name: "City", icon: "globe" }, { name: "Place ID" }, { name: "State", icon: "globe" }] },
  {
    name: "product_details",
    used: true,
    rows: [{ name: "Category", checked: true }, { name: "Product ID" }, { name: "Product Name" }, { name: "Sub-Category" }],
  },
  {
    name: "sales_details",
    used: true,
    rows: [
      { name: "Cost", icon: "sum" },
      { name: "Customer ID" },
      { name: "Discount", icon: "sum" },
      { name: "Gross profit", icon: "sum", checked: true },
      { name: "Order ID" },
      { name: "Place ID" },
      { name: "Product ID" },
      { name: "Quantity", icon: "sum", checked: true },
      { name: "Sales", icon: "sum", checked: true },
      { name: "Sales ID", icon: "sum" },
    ],
  },
];

function Field({ row }: { row: FieldRow }) {
  const [on, setOn] = useState(Boolean(row.checked));
  return (
    <label className="flex h-full items-center rounded-[2px] bg-[#636363]">
      <span className="flex w-[24px] justify-center pl-1">
        {row.icon === "date" && <span className="border-y-[3px] border-l-4 border-y-transparent border-l-[#999]" />}
      </span>
      <span className="relative flex">
        <input
          type="checkbox"
          checked={on}
          onChange={() => setOn(!on)}
          className="size-[10px] appearance-none bg-white checked:bg-[#f2c811]"
        />
        {on && (
          <svg className="pointer-events-none absolute inset-0" width="10" height="10" viewBox="0 0 10 10" fill="none" aria-hidden="true">
            <path d="M2 5l2 2 4-4" stroke="#5c4a00" />
          </svg>
        )}
      </span>
      <span className="flex w-[17px] justify-center">
        {row.icon === "sum" && (
          <Svg size={9}>
            <path d="M8 2V1H1l4 4-4 3h7V7" stroke="#999" />
          </Svg>
        )}
        {row.icon === "globe" && (
          <Svg size={10}>
            <circle cx="5" cy="5" r="4.5" fill="#ddd" />
            <path d="M1 5h8M5 1v8" stroke="#aaa" />
          </Svg>
        )}
        {row.icon === "date" && (
          <Svg size={10}>
            <path d="M0 0h10v10H0z" fill="#ddd" />
            <path d="M2 3h6M2 5h6M2 7h6" stroke="#888" strokeDasharray="1 1" />
          </Svg>
        )}
      </span>
      <span className="whitespace-nowrap">{row.name}</span>
    </label>
  );
}

function FieldsPane() {
  return (
    <aside className="flex w-[155px] shrink-0 flex-col overflow-hidden bg-[#434343] text-[10px] text-[#f0f0f0]">
      <div className="-mr-[5px] shrink-0">
        <PaneHeader title="FIELDS" />
      </div>
      <div className="shrink-0 border-b border-[#2c2c2c] pt-1 pb-[3px] pl-[3px]">
        <label className="flex h-[26px] items-center gap-[5px] border border-black bg-[#1e1e1e] pl-[9px] text-[#aaa]">
          <Search size={15} strokeWidth={1.4} className="shrink-0 -scale-x-100" />
          <input type="text" placeholder="Search" aria-label="Search" className="w-full min-w-0 bg-transparent text-[11px] outline-none placeholder:text-[#aaa]" />
        </label>
      </div>
      <div className="mt-[7px] flex min-h-0 flex-1 flex-col pr-px pl-1">
        <div className="flex h-[12px] shrink-0 flex-col justify-end overflow-hidden">
          <div className="h-[17px] shrink-0">
            <Field row={{ name: "Customer Name" }} />
          </div>
        </div>
        {tables.map((t) => (
          <section key={t.name} className="contents">
            <h3 className={`flex h-7 shrink-0 items-center ${t.used ? "text-[#f0c020]" : ""}`}>
              <span className="mt-1 mr-[9px] ml-[2px] border-b-[5px] border-l-[5px] border-b-[#999] border-l-transparent" />
              <Svg size={11}>
                <path d="M0 0h11v11H0z" fill="#ddd" />
                <path d="M0 4h11M0 7h11M4 3v8M7 3v8" stroke="#666" strokeWidth=".8" />
              </Svg>
              <span className="ml-[9px]">{t.name}</span>
            </h3>
            {t.rows.map((row) => (
              <div key={row.name} className="min-h-0 flex-1 pb-px">
                <Field row={row} />
              </div>
            ))}
          </section>
        ))}
      </div>
    </aside>
  );
}

export default function App() {
  return (
    <div className="flex h-screen min-h-[673px] flex-col bg-white font-['Open_Sans','Noto_Sans',sans-serif]">
      <TitleBar />
      <MenuTabs />
      <Ribbon />
      <div className="flex min-h-0 flex-1">
        <ViewRail />
        <Report />
        <Visualizations />
        <FieldsPane />
      </div>
      <footer className="h-1 shrink-0 bg-[#333]" />
    </div>
  );
}
